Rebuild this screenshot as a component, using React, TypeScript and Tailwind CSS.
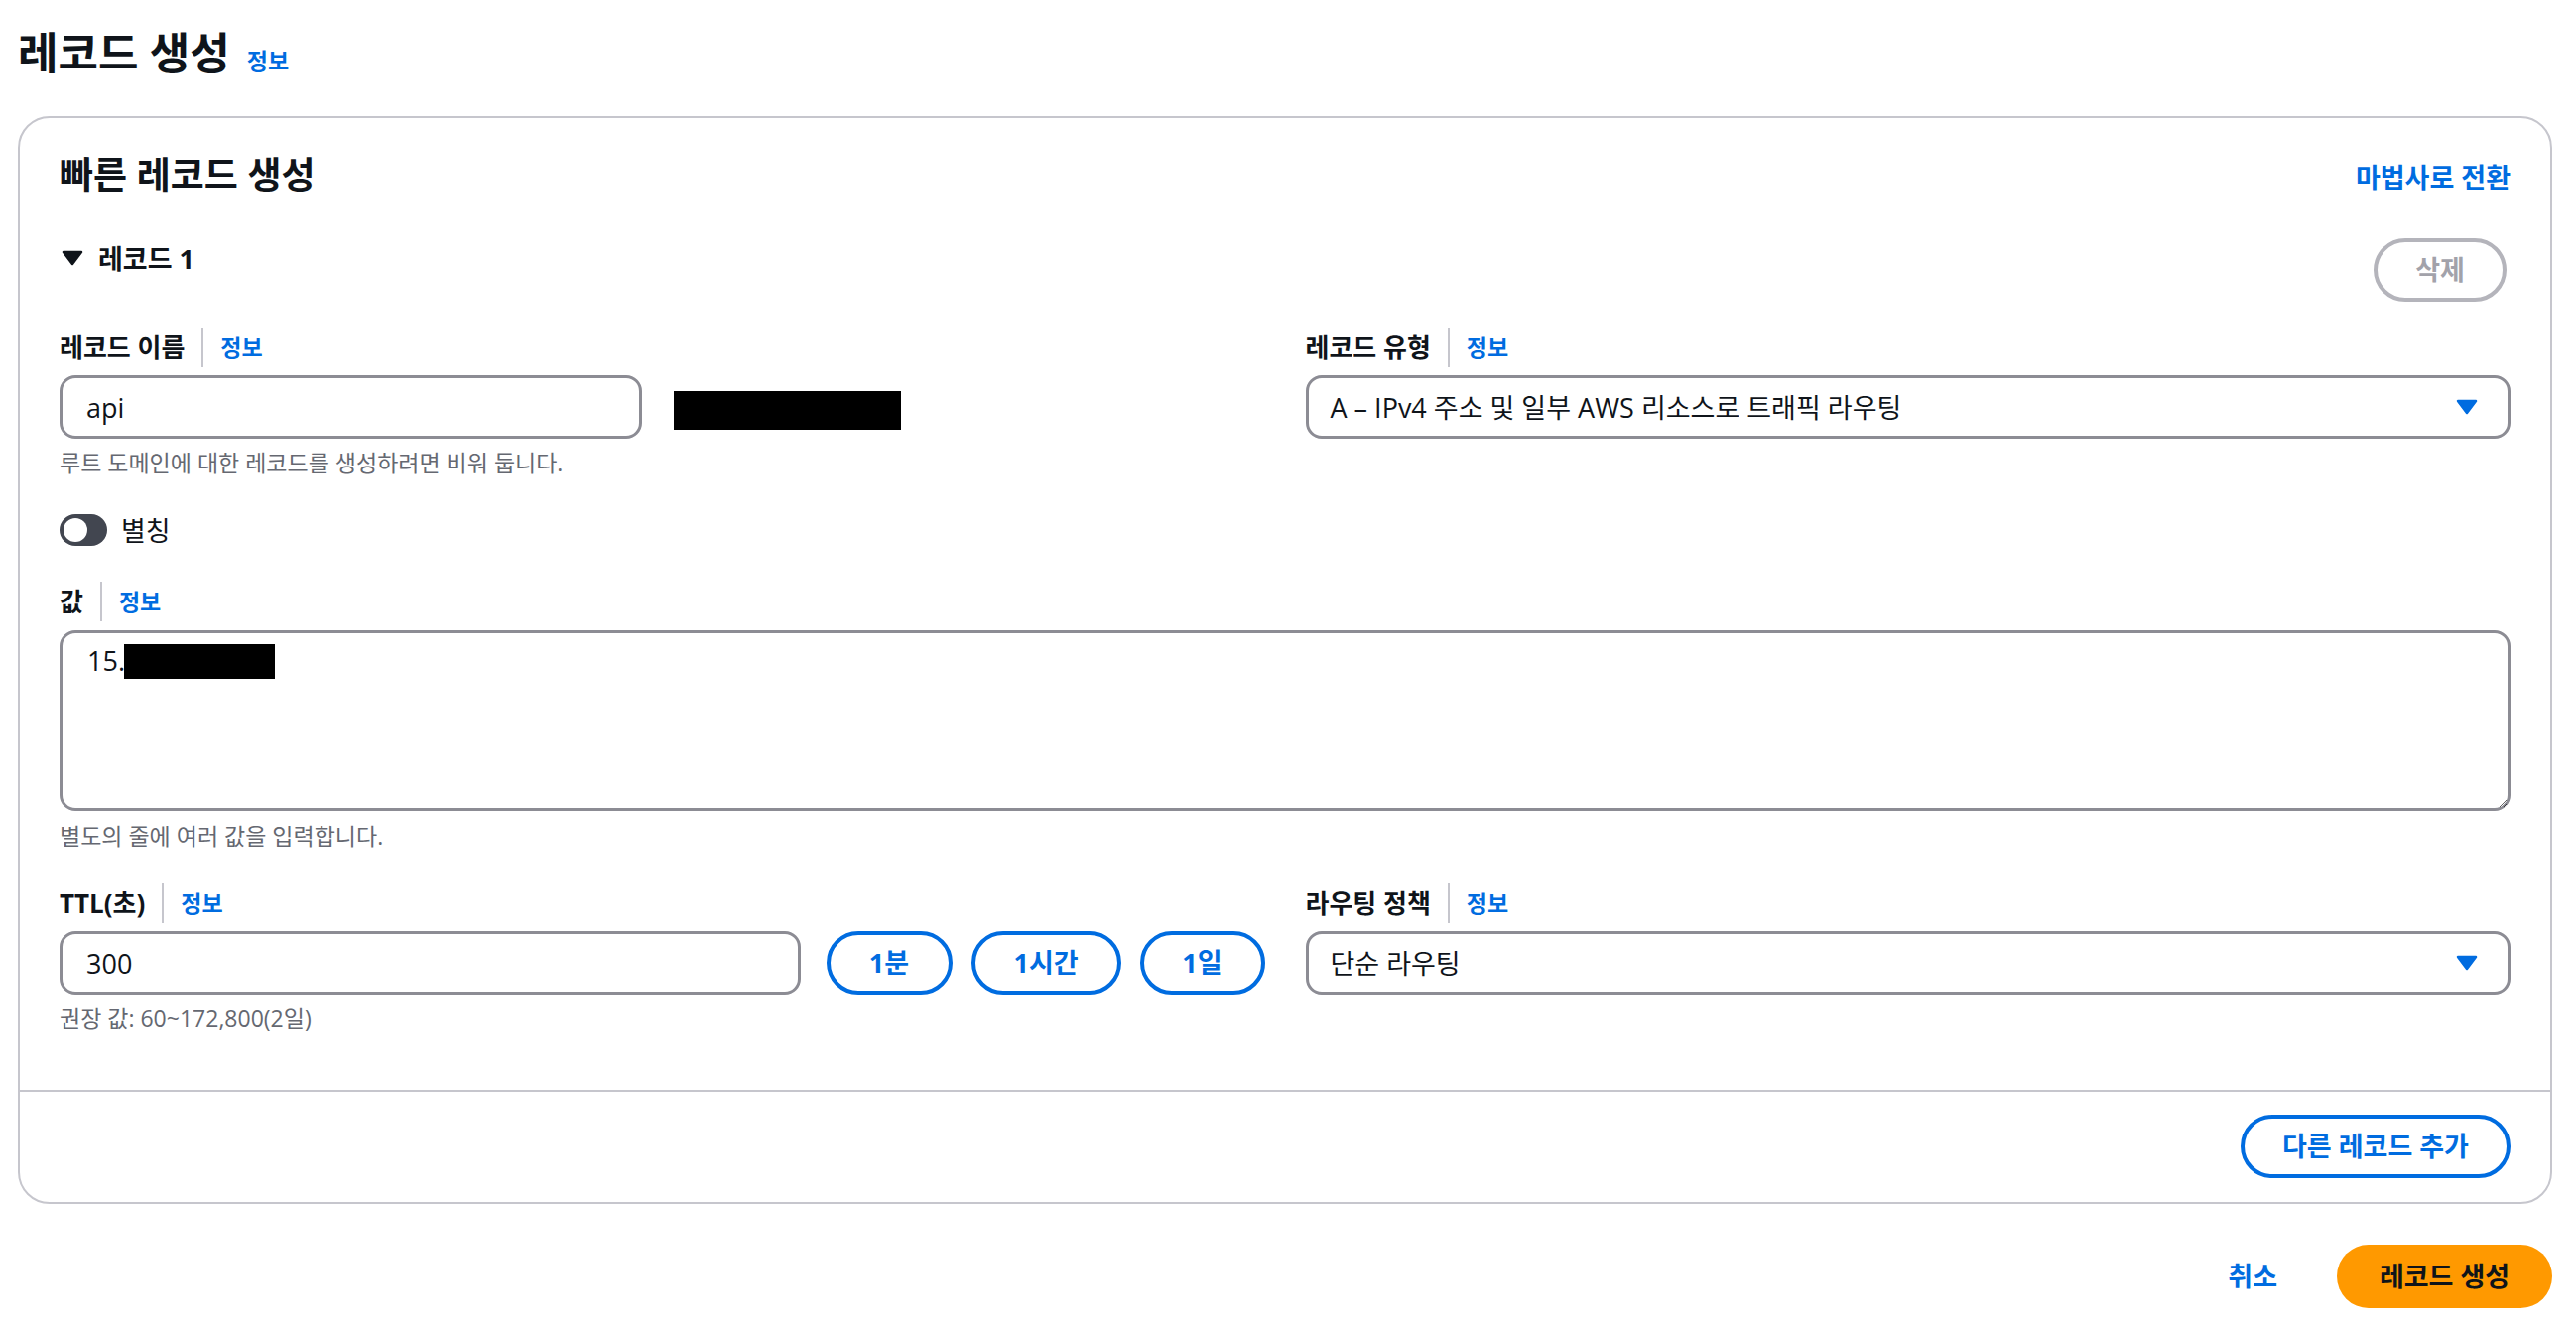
import type { ReactNode } from "react";

function Caret({ color }: { color: string }) {
  return (
    <svg width="22" height="16" viewBox="0 0 22 16" aria-hidden="true">
      <path d="M2 2h18L11 14z" fill={color} stroke={color} strokeWidth="2.5" strokeLinejoin="round" />
    </svg>
  );
}

function FieldLabel({ label }: { label: string }) {
  return (
    <div className="flex h-[40px] items-center">
      <span className="text-[26px] font-bold leading-none text-[#0f141a]">{label}</span>
      <span className="mx-[17px] h-[40px] w-[2px] bg-[#c6c6cd]" />
      <a href="#" className="text-[23px] font-bold leading-none text-[#006ce0]">
        정보
      </a>
    </div>
  );
}

function Helper({ children }: { children: ReactNode }) {
  return <p className="flex h-[32px] items-center text-[23px] leading-none text-[#656871]">{children}</p>;
}

function Select({ value }: { value: string }) {
  return (
    <button
      type="button"
      className="flex h-[64px] w-full items-center justify-between rounded-[16px] border-[3px] border-[#8c8c94] bg-white pl-[22px] pr-[30px] text-left text-[27px] leading-none text-[#0f141a]"
    >
      <span>{value}</span>
      <Caret color="#006ce0" />
    </button>
  );
}

const ttlPresets = [
  { label: "1분", width: "w-[127px]" },
  { label: "1시간", width: "w-[151px]" },
  { label: "1일", width: "w-[126px]" },
];

export default function App() {
  return (
    <div className="min-h-screen bg-white pl-[18px] pr-[24px] pt-[24px] font-['Open_Sans','Noto_Sans_CJK_KR',sans-serif] text-[#0f141a]">
      <div className="flex h-[60px] items-baseline gap-[17px] pt-[3px]">
        <h1 className="text-[44px] font-bold leading-[52px]">레코드 생성</h1>
        <a href="#" className="text-[23px] font-bold text-[#006ce0]">
          정보
        </a>
      </div>

      <section className="mt-[33px] rounded-[32px] border-2 border-[#c6c6cd]">
        <div className="px-[40px] pb-[56px] pt-[28px]">
          <div className="flex h-[56px] items-center justify-between">
            <h2 className="text-[37px] font-bold leading-none">빠른 레코드 생성</h2>
            <a href="#" className="pt-[6px] text-[27px] font-bold leading-none text-[#006ce0]">
              마법사로 전환
            </a>
          </div>

          <div className="mt-[37px] flex items-start justify-between">
            <div className="flex h-[40px] items-center gap-[15px] pl-[2px]">
              <Caret color="#0f141a" />
              <span className="text-[27px] font-bold leading-none">레코드 1</span>
            </div>
            <button
              type="button"
              className="mr-[4px] h-[64px] w-[134px] rounded-full border-4 border-[#b4b4bb] text-[27px] font-bold text-[#a2a2aa]"
            >
              삭제
            </button>
          </div>

          <div className="mt-[26px] grid grid-cols-2 gap-x-[41px]">
            <div>
              <FieldLabel label="레코드 이름" />
              <div className="mt-[8px] flex items-center">
                <input
                  readOnly
                  defaultValue="api"
                  className="h-[64px] w-[587px] rounded-[16px] border-[3px] border-[#8c8c94] px-[24px] text-[27px] text-[#0f141a] outline-none"
                />
                <div className="ml-[32px] mt-[6px] h-[39px] w-[229px] bg-black" />
              </div>
              <div className="mt-[8px]">
                <Helper>루트 도메인에 대한 레코드를 생성하려면 비워 둡니다.</Helper>
              </div>
            </div>
            <div>
              <FieldLabel label="레코드 유형" />
              <div className="mt-[8px]">
                <Select value="A – IPv4 주소 및 일부 AWS 리소스로 트래픽 라우팅" />
              </div>
            </div>
          </div>

          <div className="mt-[32px] flex h-[40px] items-center gap-[14px]">
            <span className="flex h-[32px] w-[48px] items-center rounded-full bg-[#424650] pl-[4px]">
              <span className="h-[24px] w-[24px] rounded-full bg-white" />
            </span>
            <span className="text-[27px] leading-none">별칭</span>
          </div>

          <div className="mt-[32px]">
            <FieldLabel label="값" />
            <div className="relative mt-[9px]">
              <textarea
                readOnly
                defaultValue="15."
                className="block h-[182px] w-full rounded-[16px] border-[3px] border-[#8c8c94] px-[25px] pt-[10px] text-[27px] leading-[36px] text-[#0f141a] outline-none"
              />
              <div className="absolute left-[65px] top-[14px] h-[35px] w-[152px] bg-black" />
            </div>
            <div className="mt-[9px]">
              <Helper>별도의 줄에 여러 값을 입력합니다.</Helper>
            </div>
          </div>

          <div className="mt-[32px] grid grid-cols-2 gap-x-[41px]">
            <div>
              <FieldLabel label="TTL(초)" />
              <div className="mt-[8px] flex items-center">
                <input
                  readOnly
                  defaultValue="300"
                  className="h-[64px] min-w-0 flex-1 rounded-[16px] border-[3px] border-[#8c8c94] px-[24px] text-[27px] text-[#0f141a] outline-none"
                />
                <div className="ml-[26px] flex gap-[19px]">
                  {ttlPresets.map((preset) => (
                    <button
                      key={preset.label}
                      type="button"
                      className={`h-[64px] ${preset.width} rounded-full border-4 border-[#006ce0] text-[27px] font-bold text-[#006ce0]`}
                    >
                      {preset.label}
                    </button>
                  ))}
                </div>
              </div>
              <div className="mt-[8px]">
                <Helper>권장 값: 60~172,800(2일)</Helper>
              </div>
            </div>
            <div>
              <FieldLabel label="라우팅 정책" />
              <div className="mt-[8px]">
                <Select value="단순 라우팅" />
              </div>
            </div>
          </div>
        </div>

        <div className="flex justify-end border-t-2 border-[#c6c6cd] px-[40px] pb-[24px] pt-[23px]">
          <button
            type="button"
            className="h-[64px] w-[272px] rounded-full border-4 border-[#006ce0] text-[27px] font-bold text-[#006ce0]"
          >
            다른 레코드 추가
          </button>
        </div>
      </section>

      <div className="mt-[41px] flex items-center justify-end gap-[60px]">
        <a href="#" className="text-[27px] font-bold text-[#006ce0]">
          취소
        </a>
        <button
          type="button"
          className="h-[64px] w-[217px] rounded-full bg-[#ff9900] text-[27px] font-bold text-[#0f141a]"
        >
          레코드 생성
        </button>
      </div>
    </div>
  );
}
